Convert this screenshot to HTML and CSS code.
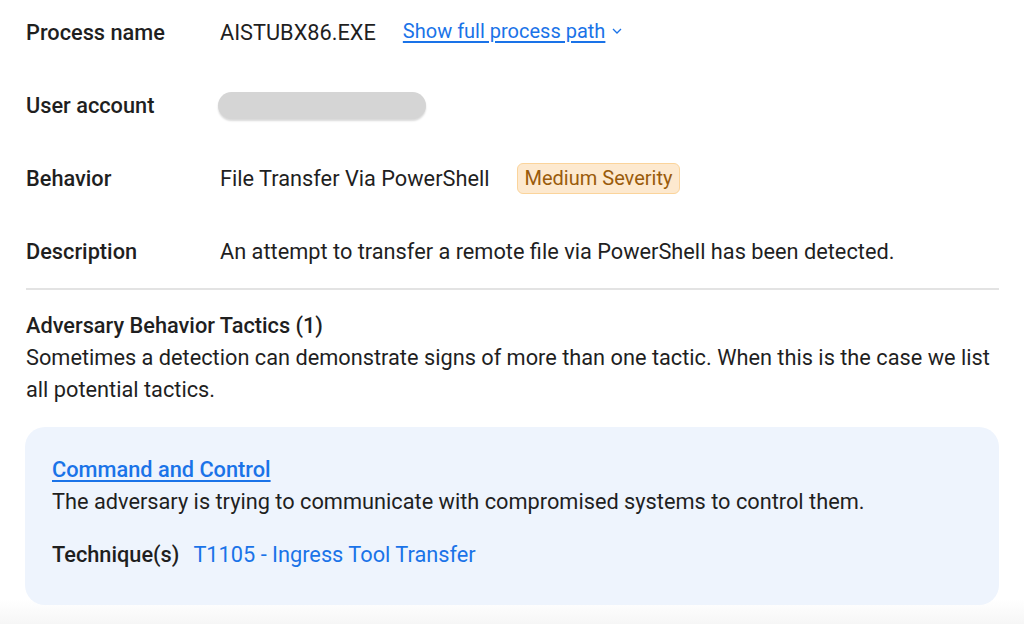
FILE: index.html
```html
<!DOCTYPE html>
<html lang="en">
  <head>
    <meta charset="utf-8" />
    <title>Detection details</title>
    <link rel="stylesheet" href="styles.css">
  </head>
  <body>
    <div class="details">
      <div class="fields">
        <div class="row">
          <div class="label">Process name</div>
          <div class="value">
            AISTUBX86.EXE
            <a class="link path-link" href="#">Show full process path</a>
            <svg class="chevron" viewBox="0 0 10 6" width="10" height="6">
              <path d="M1 1l4 4 4-4" fill="none" stroke="currentColor" stroke-width="1.3" />
            </svg>
          </div>
        </div>
        <div class="row">
          <div class="label">User account</div>
          <div class="value"><span class="redacted"></span></div>
        </div>
        <div class="row">
          <div class="label">Behavior</div>
          <div class="value">
            File Transfer Via PowerShell
            <span class="badge">Medium Severity</span>
          </div>
        </div>
        <div class="row">
          <div class="label">Description</div>
          <div class="value">An attempt to transfer a remote file via PowerShell has been detected.</div>
        </div>
      </div>

      <div class="tactics">
        <h3 class="tactics-title">Adversary Behavior Tactics (1)</h3>
        <p class="tactics-intro">Sometimes a detection can demonstrate signs of more than one tactic. When this is the case we list all potential tactics.</p>

        <div class="tactic-card">
          <a class="link tactic-name" href="#">Command and Control</a>
          <p class="tactic-desc">The adversary is trying to communicate with compromised systems to control them.</p>
          <div class="technique">
            <span class="technique-label">Technique(s)</span>
            <a class="technique-link" href="#">T1105 - Ingress Tool Transfer</a>
          </div>
        </div>
      </div>
    </div>
  </body>
</html>
```

FILE: styles.css
```css
body {
  margin: 0;
  height: 624px;
  background: linear-gradient(180deg, #ffffff 0%, #ffffff 96%, #f6f6f6 100%);
  color: #1f1f1f;
  font-family: 'Roboto', 'Liberation Sans', sans-serif;
  font-size: 21.75px;
  -webkit-font-smoothing: antialiased;
}

.details {
  padding: 14px 25px 0 26px;
}

.fields {
  display: flex;
  flex-direction: column;
  gap: 37px;
}

.row {
  display: flex;
  align-items: center;
  height: 36px;
}

.label {
  width: 194px;
  flex-shrink: 0;
  font-weight: 500;
}

.value {
  display: flex;
  align-items: center;
  white-space: nowrap;
}

.link {
  color: #1a73e8;
  text-decoration: underline;
  text-underline-offset: 3px;
}

.path-link {
  margin-left: 27px;
  font-size: 20px;
  margin-top: -3px;
}

.chevron {
  color: #1a73e8;
  margin-left: 7px;
  margin-top: -2px;
}

.redacted {
  display: inline-block;
  width: 208px;
  height: 27px;
  margin-left: -2px;
  border-radius: 14px;
  background: #d5d5d5;
  box-shadow: 0 2px 2px rgba(0, 0, 0, 0.15);
}

.badge {
  margin-left: 27px;
  padding: 2px 7px 3px;
  border: 1.5px solid #fbd49b;
  border-radius: 6px;
  background: #fde9cf;
  color: #9a5b0b;
  font-size: 20px;
}

.tactics {
  margin-top: 19px;
  border-top: 2px solid #e3e3e3;
  padding-top: 20px;
}

.tactics-title {
  margin: 0;
  font-size: 21.75px;
  font-weight: 500;
  line-height: 32px;
}

.tactics-intro {
  margin: 0;
  line-height: 32px;
}

.tactic-card {
  margin: 21px 0 0 -1px;
  padding: 27px 27px 34px;
  border-radius: 20px;
  background: #eef4fd;
}

.tactic-name {
  display: inline-block;
  font-weight: 500;
  line-height: 32px;
}

.tactic-desc {
  margin: 0 0 21px;
  line-height: 32px;
}

.technique {
  display: flex;
  align-items: center;
  gap: 14px;
  line-height: 32px;
}

.technique-label {
  font-weight: 500;
}

.technique-link {
  color: #1a73e8;
  text-decoration: none;
}
```
